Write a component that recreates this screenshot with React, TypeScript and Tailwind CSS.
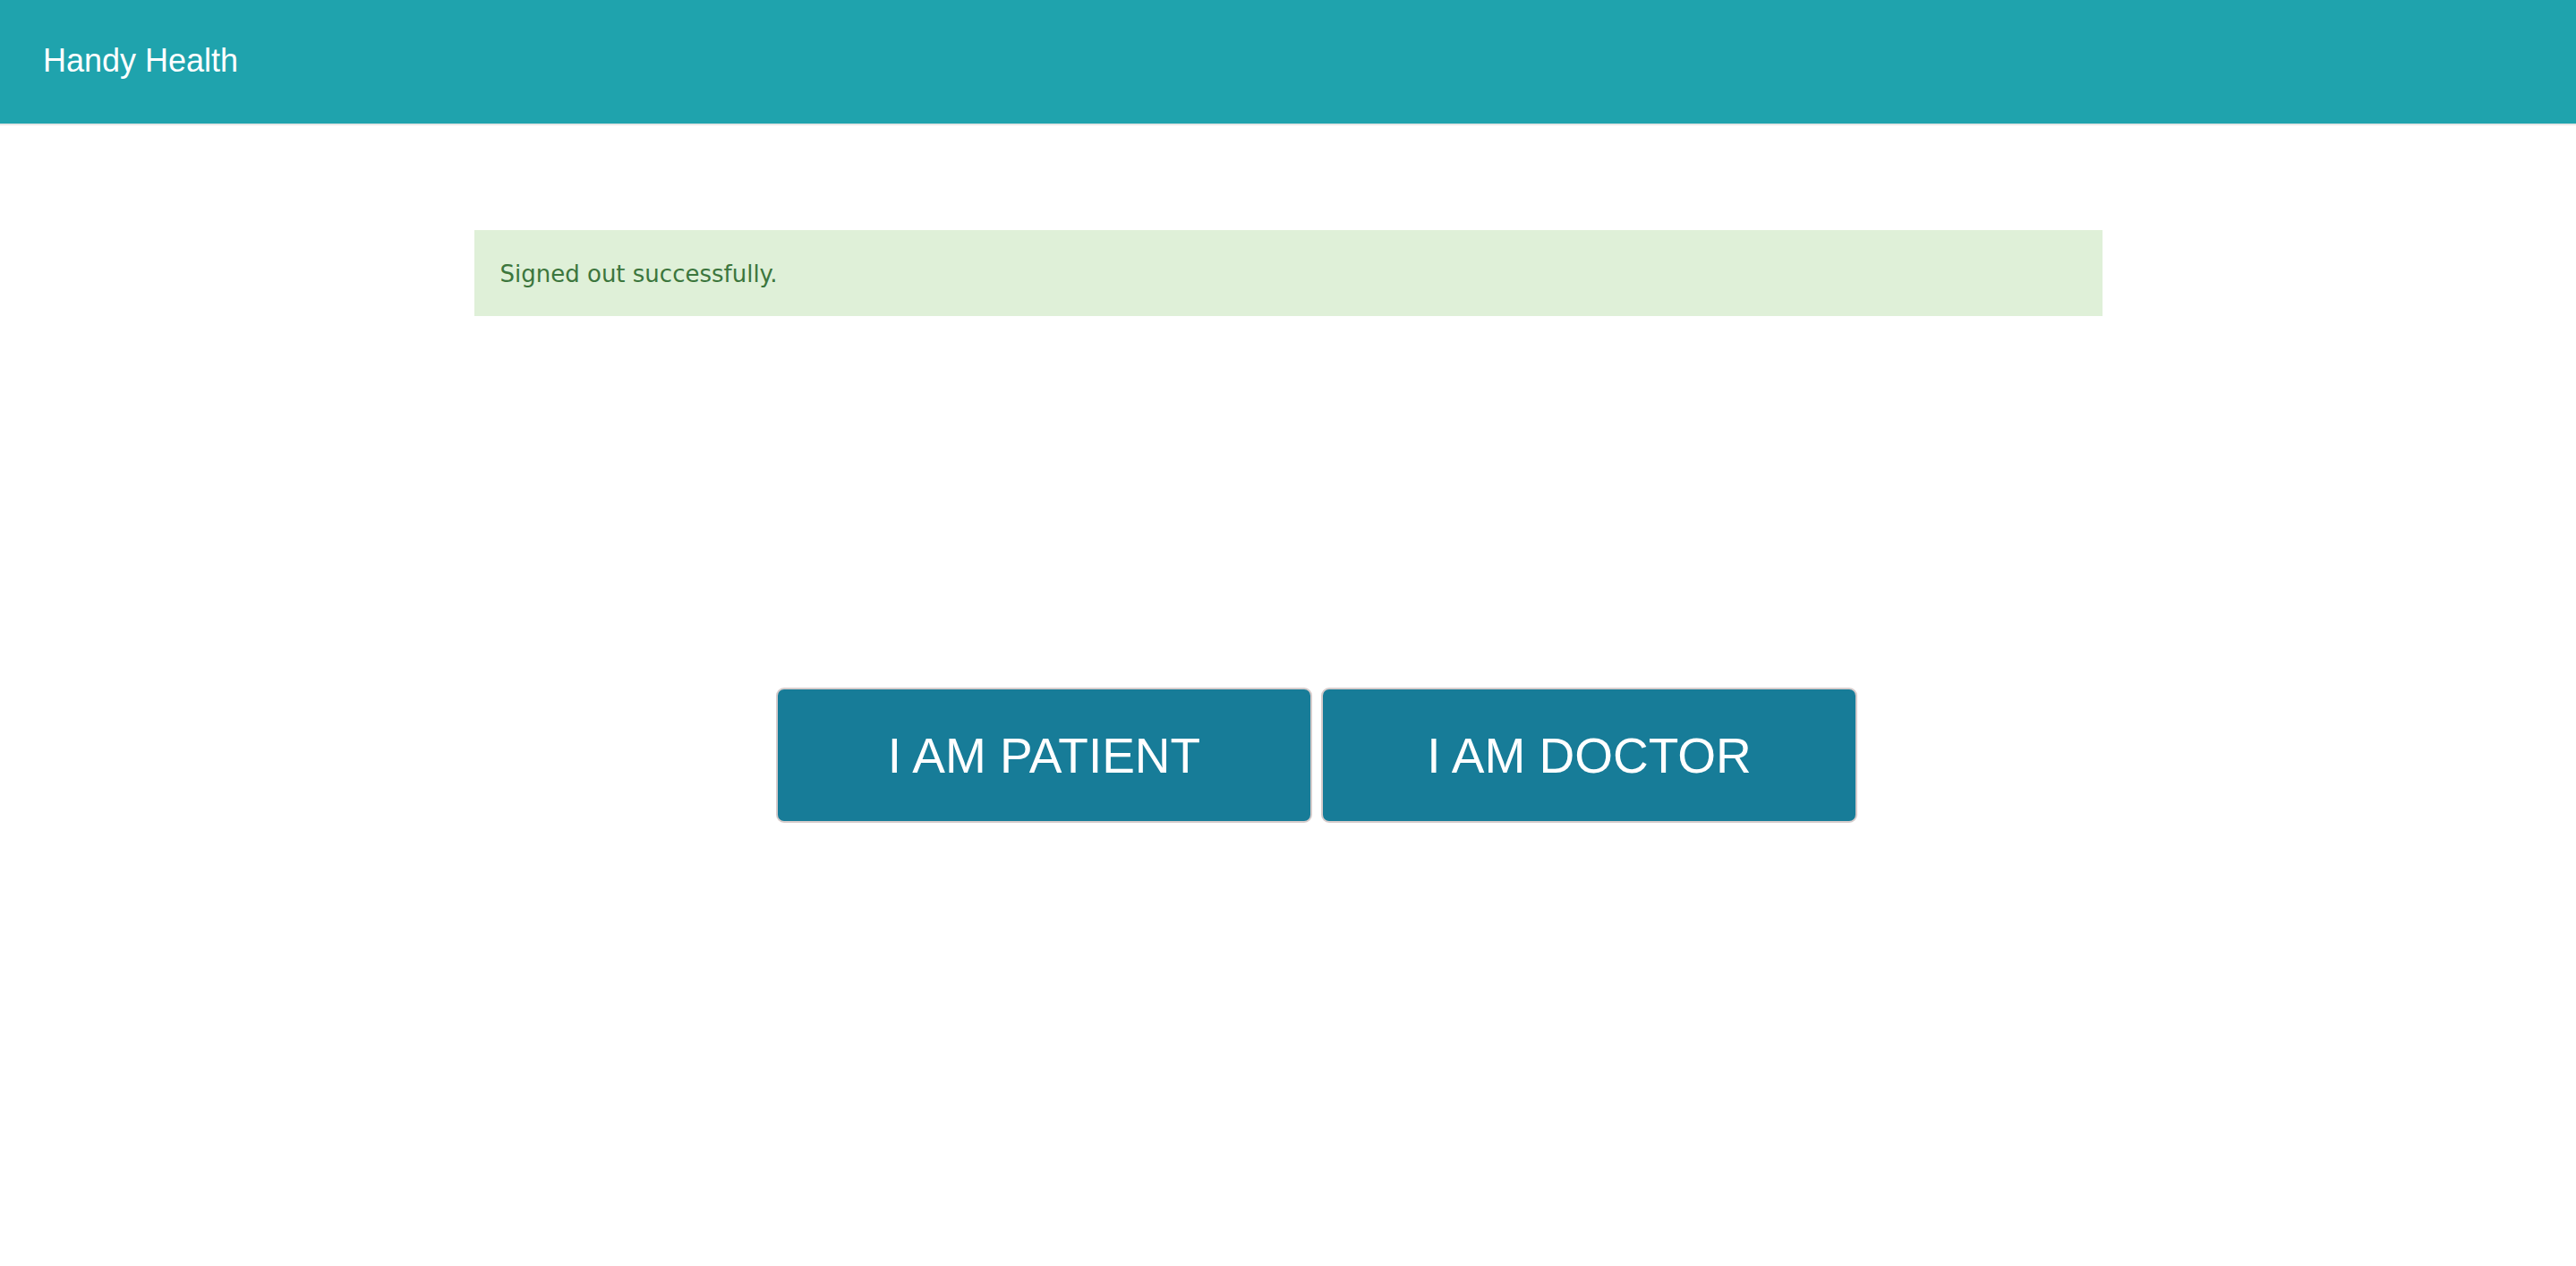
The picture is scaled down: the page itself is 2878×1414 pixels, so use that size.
export default function App() {
  return (
    <div className="min-h-[1414px] bg-white">
      <header className="h-[140px] bg-[#1fa3ad] border-b-2 border-[#e7e7e7] flex items-center px-[48px]">
        <span className="text-white text-[36px] font-['Liberation_Sans',Arial,sans-serif] -mt-[3px]">
          Handy Health
        </span>
      </header>

      <div className="w-[1819px] mx-auto mt-[117px] h-[96px] bg-[#dff0d8] flex items-center px-[29px]">
        <p className="text-[#3c763d] text-[26px] font-['DejaVu_Sans',Verdana,sans-serif] mt-[2px]">
          Signed out successfully.
        </p>
      </div>

      <div className="flex justify-center gap-[10px] mt-[415px] pl-[64px]">
        {['I AM PATIENT', 'I AM DOCTOR'].map((label) => (
          <button
            key={label}
            className="w-[599px] h-[151px] bg-[#177c98] border-2 border-[#d6cccc] rounded-[9px] text-white text-[55px] font-['Liberation_Sans',Arial,sans-serif] pt-[2px]"
          >
            {label}
          </button>
        ))}
      </div>
    </div>
  )
}
